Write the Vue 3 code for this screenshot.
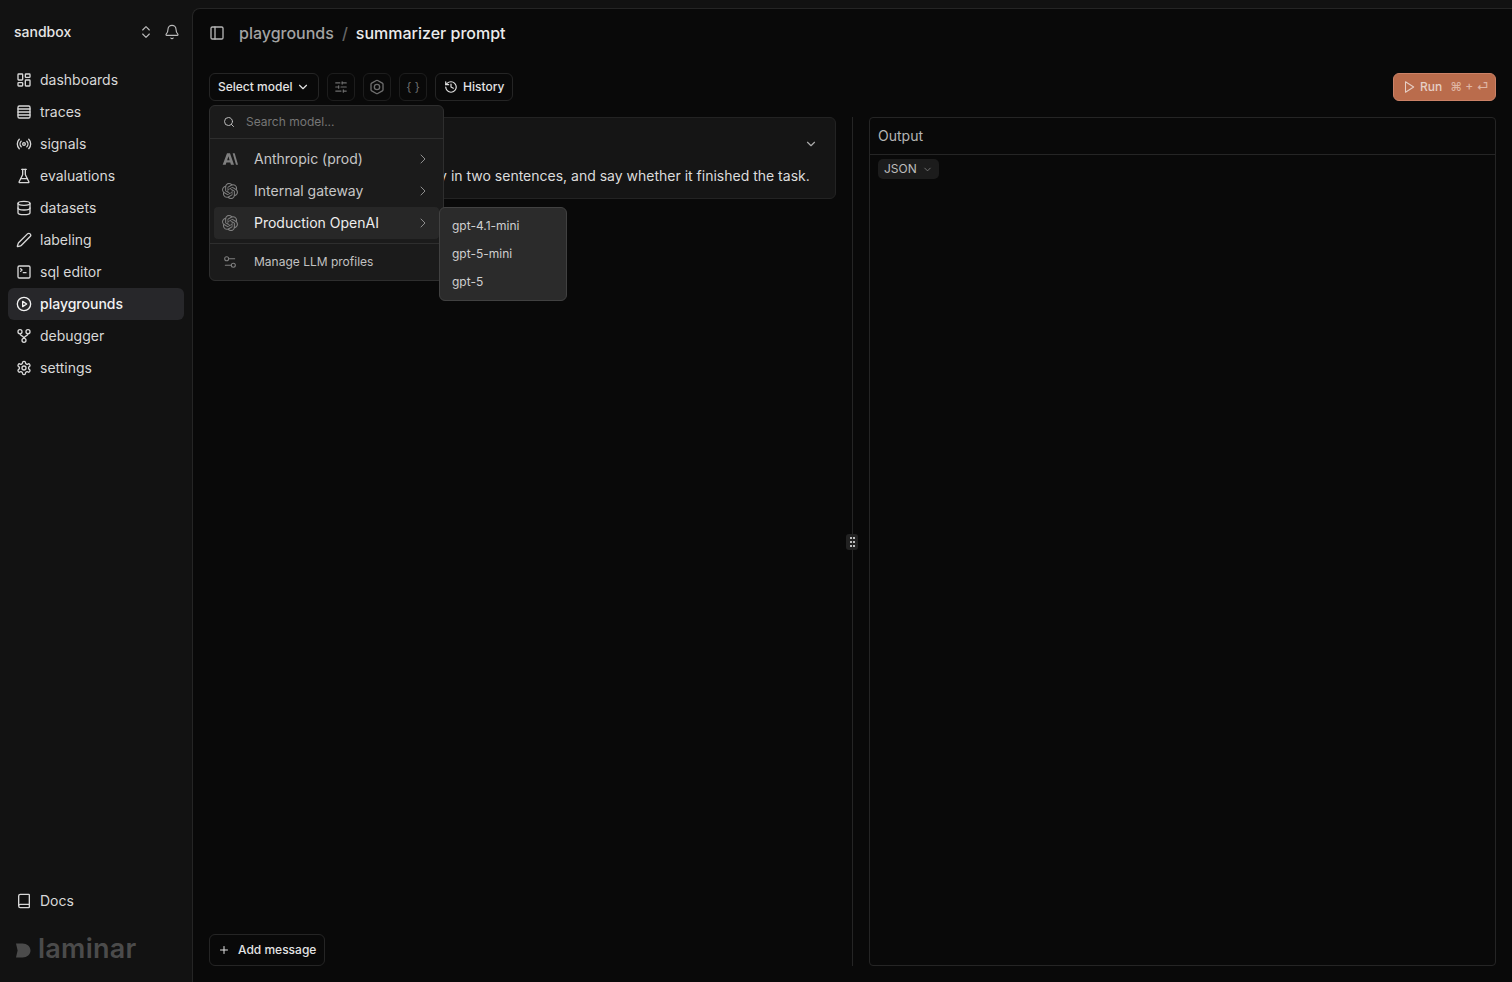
<template>
  <div class="app">
    <aside class="sidebar">
      <div class="project">
        <span class="project-name">sandbox</span>
        <svg class="ico switch" viewBox="0 0 24 24" v-html="icons.updown"></svg>
        <svg class="ico bell" viewBox="0 0 24 24" v-html="icons.bell"></svg>
      </div>
      <nav class="nav">
        <a v-for="item in navItems" :key="item.label" class="nav-item" :class="{ active: item.label === 'playgrounds' }">
          <svg class="ico" viewBox="0 0 24 24" v-html="icons[item.icon]"></svg>
          {{ item.label }}
        </a>
      </nav>
      <div class="sidebar-foot">
        <a class="nav-item docs">
          <svg class="ico" viewBox="0 0 24 24" v-html="icons.book"></svg>
          Docs
        </a>
        <div class="logo">
          <svg class="logo-mark" viewBox="0 0 15 15"><path d="M0 0.5h6.5C11 0.5 14.5 3.4 14.5 7.5S11 14.5 6.5 14.5H0L1.6 7.5z" /></svg>
          <span>laminar</span>
        </div>
      </div>
    </aside>

    <main class="main">
      <header class="topbar">
        <svg class="ico toggle" viewBox="0 0 24 24" v-html="icons.panel"></svg>
        <span class="crumb">playgrounds</span>
        <span class="crumb-sep">/</span>
        <span class="crumb current">summarizer prompt</span>
      </header>

      <div class="toolbar">
        <button class="btn model-btn">
          Select model
          <svg class="ico small" viewBox="0 0 24 24" v-html="icons.down"></svg>
        </button>
        <button class="btn square"><svg class="ico small dim" viewBox="0 0 24 24" v-html="icons.sliders"></svg></button>
        <button class="btn square"><svg class="ico dim" viewBox="0 0 24 24" v-html="icons.hexagon"></svg></button>
        <button class="btn square braces">{ }</button>
        <button class="btn history">
          <svg class="ico small" viewBox="0 0 24 24" v-html="icons.history"></svg>
          History
        </button>
        <button class="run">
          <svg class="ico run-ico" viewBox="0 0 24 24" v-html="icons.play"></svg>
          <span class="run-label">Run</span>
          <span class="run-keys">⌘ + ⏎</span>
        </button>

        <!-- model picker, open -->
        <div class="picker">
          <div class="picker-search">
            <svg class="ico tiny" viewBox="0 0 24 24" v-html="icons.search"></svg>
            <span>Search model...</span>
          </div>
          <div class="picker-list">
            <div v-for="p in providers" :key="p.name" class="provider" :class="{ open: p.open }">
              <svg v-if="p.logo === 'openai'" class="provider-logo" viewBox="0 0 24 24" fill="currentColor"><path :d="openaiPath" /></svg>
              <svg v-else class="provider-logo" viewBox="0 0 24 18" fill="currentColor"><path d="M7.5.5H12l6 17h-4.6l-1-3.2H6.6l-1 3.2H1zM11.4 10.7 9.6 5 7.7 10.7z" fill-rule="evenodd" /><path d="M16 .5h3l5 17h-3z" /></svg>
              <span class="provider-name">{{ p.name }}</span>
              <svg class="ico chev" viewBox="0 0 24 24" v-html="icons.right"></svg>
            </div>
          </div>
          <div class="picker-foot">
            <svg class="ico foot-ico" viewBox="0 0 24 24" v-html="icons.manage"></svg>
            <span>Manage LLM profiles</span>
          </div>
        </div>
        <div class="submenu">
          <div v-for="m in models" :key="m" class="submenu-item">{{ m }}</div>
        </div>
      </div>

      <div class="workspace">
        <section class="editor">
          <div class="message">
            <div class="message-head">
              <span>System</span>
              <svg class="ico small msg-chev" viewBox="0 0 24 24" v-html="icons.down"></svg>
            </div>
            <p class="message-text">Summarize the agent's run briefly in two sentences, and say whether it finished the task.</p>
          </div>
          <button class="btn add">
            <svg class="ico tiny" viewBox="0 0 24 24" v-html="icons.plus"></svg>
            Add message
          </button>
        </section>

        <div class="divider">
          <span class="grip">
            <i v-for="n in 6" :key="n"></i>
          </span>
        </div>

        <section class="output">
          <div class="output-head">Output</div>
          <div class="output-body">
            <span class="format">
              JSON
              <svg class="ico format-chev" viewBox="0 0 24 24" v-html="icons.down"></svg>
            </span>
          </div>
        </section>
      </div>
    </main>
  </div>
</template>

<script setup>
const navItems = [
  { label: 'dashboards', icon: 'dashboard' },
  { label: 'traces', icon: 'rows' },
  { label: 'signals', icon: 'radio' },
  { label: 'evaluations', icon: 'flask' },
  { label: 'datasets', icon: 'database' },
  { label: 'labeling', icon: 'pen' },
  { label: 'sql editor', icon: 'terminal' },
  { label: 'playgrounds', icon: 'play2' },
  { label: 'debugger', icon: 'fork' },
  { label: 'settings', icon: 'gear' }
]

const providers = [
  { name: 'Anthropic (prod)', logo: 'anthropic' },
  { name: 'Internal gateway', logo: 'openai' },
  { name: 'Production OpenAI', logo: 'openai', open: true }
]

const models = ['gpt-4.1-mini', 'gpt-5-mini', 'gpt-5']

const openaiPath = 'M22.2819 9.8211a5.9847 5.9847 0 0 0-.5157-4.9108 6.0462 6.0462 0 0 0-6.5098-2.9A6.0651 6.0651 0 0 0 4.9807 4.1818a5.9847 5.9847 0 0 0-3.9977 2.9 6.0462 6.0462 0 0 0 .7427 7.0966 5.98 5.98 0 0 0 .511 4.9107 6.051 6.051 0 0 0 6.5146 2.9001A5.9847 5.9847 0 0 0 13.2599 24a6.0557 6.0557 0 0 0 5.7718-4.2058 5.9894 5.9894 0 0 0 3.9977-2.9001 6.0557 6.0557 0 0 0-.7475-7.0729zm-9.022 12.6081a4.4755 4.4755 0 0 1-2.8764-1.0408l.1419-.0804 4.7783-2.7582a.7948.7948 0 0 0 .3927-.6813v-6.7369l2.02 1.1686a.071.071 0 0 1 .038.052v5.5826a4.504 4.504 0 0 1-4.4945 4.4944zm-9.6607-4.1254a4.4708 4.4708 0 0 1-.5346-3.0137l.142.0852 4.783 2.7582a.7712.7712 0 0 0 .7806 0l5.8428-3.3685v2.3324a.0804.0804 0 0 1-.0332.0615L9.74 19.9502a4.4992 4.4992 0 0 1-6.1408-1.6464zM2.3408 7.8956a4.485 4.485 0 0 1 2.3655-1.9728V11.6a.7664.7664 0 0 0 .3879.6765l5.8144 3.3543-2.0201 1.1685a.0757.0757 0 0 1-.071 0l-4.8303-2.7865A4.504 4.504 0 0 1 2.3408 7.872zm16.5963 3.8558L13.1038 8.364 15.1192 7.2a.0757.0757 0 0 1 .071 0l4.8303 2.7913a4.4944 4.4944 0 0 1-.6765 8.1042v-5.6772a.79.79 0 0 0-.407-.667zm2.0107-3.0231l-.142-.0852-4.7735-2.7818a.7759.7759 0 0 0-.7854 0L9.409 9.2297V6.8974a.0662.0662 0 0 1 .0284-.0615l4.8303-2.7866a4.4992 4.4992 0 0 1 6.6802 4.66zM8.3065 12.863l-2.02-1.1638a.0804.0804 0 0 1-.038-.0567V6.0742a4.4992 4.4992 0 0 1 7.3757-3.4537l-.142.0805L8.704 5.459a.7948.7948 0 0 0-.3927.6813zm1.0976-2.3654l2.602-1.4998 2.6069 1.4998v2.9994l-2.5974 1.4997-2.6067-1.4997Z'

const icons = {
  updown: '<path d="m7 15 5 5 5-5"/><path d="m7 9 5-5 5 5"/>',
  bell: '<path d="M10.268 21a2 2 0 0 0 3.464 0"/><path d="M3.262 15.326A1 1 0 0 0 4 17h16a1 1 0 0 0 .74-1.673C19.41 13.956 18 12.499 18 8A6 6 0 0 0 6 8c0 4.499-1.411 5.956-2.738 7.326"/>',
  dashboard: '<rect x="3" y="3" width="7" height="9" rx="1"/><rect x="14" y="3" width="7" height="5" rx="1"/><rect x="14" y="12" width="7" height="9" rx="1"/><rect x="3" y="16" width="7" height="5" rx="1"/>',
  rows: '<rect x="3" y="3" width="18" height="18" rx="2"/><path d="M21 7.5H3"/><path d="M21 12H3"/><path d="M21 16.5H3"/>',
  radio: '<path d="M4.9 19.1C1 15.2 1 8.8 4.9 4.9"/><path d="M7.8 16.2c-2.3-2.3-2.3-6.1 0-8.5"/><circle cx="12" cy="12" r="2"/><path d="M16.2 7.8c2.3 2.3 2.3 6.1 0 8.5"/><path d="M19.1 4.9C23 8.8 23 15.1 19.1 19"/>',
  flask: '<path d="M10 2v7.527a2 2 0 0 1-.211.896L4.72 20.55a1 1 0 0 0 .9 1.45h12.76a1 1 0 0 0 .9-1.45l-5.069-10.127A2 2 0 0 1 14 9.527V2"/><path d="M8.5 2h7"/><path d="M7 16h10"/>',
  database: '<ellipse cx="12" cy="5" rx="9" ry="3"/><path d="M3 5V19A9 3 0 0 0 21 19V5"/><path d="M3 12A9 3 0 0 0 21 12"/>',
  pen: '<path d="M21.174 6.812a1 1 0 0 0-3.986-3.987L3.842 16.174a2 2 0 0 0-.5.83l-1.321 4.352a.5.5 0 0 0 .623.622l4.353-1.32a2 2 0 0 0 .83-.497z"/>',
  terminal: '<path d="m7 11 2-2-2-2"/><path d="M11 13h4"/><rect x="3" y="3" width="18" height="18" rx="2"/>',
  play2: '<circle cx="12" cy="12" r="10"/><polygon points="10 8 16 12 10 16 10 8"/>',
  fork: '<circle cx="6" cy="5.5" r="3"/><circle cx="18" cy="5.5" r="3"/><circle cx="12" cy="18.5" r="3"/><path d="M6 8.5c0 3.5 6 3 6 7"/><path d="M18 8.5c0 3.5-6 3-6 7"/>',
  gear: '<path d="M12.22 2h-.44a2 2 0 0 0-2 2v.18a2 2 0 0 1-1 1.73l-.43.25a2 2 0 0 1-2 0l-.15-.08a2 2 0 0 0-2.73.73l-.22.38a2 2 0 0 0 .73 2.73l.15.1a2 2 0 0 1 1 1.72v.51a2 2 0 0 1-1 1.74l-.15.09a2 2 0 0 0-.73 2.73l.22.38a2 2 0 0 0 2.73.73l.15-.08a2 2 0 0 1 2 0l.43.25a2 2 0 0 1 1 1.73V20a2 2 0 0 0 2 2h.44a2 2 0 0 0 2-2v-.18a2 2 0 0 1 1-1.73l.43-.25a2 2 0 0 1 2 0l.15.08a2 2 0 0 0 2.73-.73l.22-.39a2 2 0 0 0-.73-2.73l-.15-.08a2 2 0 0 1-1-1.74v-.5a2 2 0 0 1 1-1.74l.15-.09a2 2 0 0 0 .73-2.73l-.22-.38a2 2 0 0 0-2.73-.73l-.15.08a2 2 0 0 1-2 0l-.43-.25a2 2 0 0 1-1-1.73V4a2 2 0 0 0-2-2z"/><circle cx="12" cy="12" r="3"/>',
  book: '<path d="M4 19.5v-15A2.5 2.5 0 0 1 6.5 2H19a1 1 0 0 1 1 1v18a1 1 0 0 1-1 1H6.5a1 1 0 0 1 0-5H20"/>',
  panel: '<rect x="3" y="3" width="18" height="18" rx="2"/><path d="M9 3v18"/>',
  down: '<path d="m6 9 6 6 6-6"/>',
  right: '<path d="m9 18 6-6-6-6"/>',
  sliders: '<path d="M10 5H3"/><path d="M12 19H3"/><path d="M14 3v4"/><path d="M16 17v4"/><path d="M21 12h-9"/><path d="M21 19h-5"/><path d="M21 5h-7"/><path d="M8 10v4"/><path d="M8 12H3"/>',
  hexagon: '<path d="M21 16V8a2 2 0 0 0-1-1.73l-7-4a2 2 0 0 0-2 0l-7 4A2 2 0 0 0 3 8v8a2 2 0 0 0 1 1.73l7 4a2 2 0 0 0 2 0l7-4A2 2 0 0 0 21 16z"/><circle cx="12" cy="12" r="4"/>',
  history: '<path d="M3 12a9 9 0 1 0 9-9 9.75 9.75 0 0 0-6.74 2.74L3 8"/><path d="M3 3v5h5"/><path d="M12 7v5l4 2"/>',
  search: '<path d="m21 21-4.34-4.34"/><circle cx="11" cy="11" r="8"/>',
  manage: '<path d="M14 17H5"/><path d="M19 7h-9"/><circle cx="17" cy="17" r="3"/><circle cx="7" cy="7" r="3"/>',
  play: '<polygon points="6 3 20 12 6 21 6 3"/>',
  plus: '<path d="M5 12h14"/><path d="M12 5v14"/>'
}
</script>

<style scoped>
.app {
  display: flex;
  height: 982px;
  overflow: hidden;
  background: #121212;
  color: #e6e6e6;
  font-family: Inter, "Liberation Sans", sans-serif;
  line-height: 20px;
  will-change: opacity;
}

.ico {
  width: 16px;
  height: 16px;
  flex-shrink: 0;
  fill: none;
  stroke: currentColor;
  stroke-width: 2;
  stroke-linecap: round;
  stroke-linejoin: round;
}
.ico.small { width: 14px; height: 14px; }
.ico.tiny { width: 12px; height: 12px; }
.ico.dim { color: #6e6e6e; }

/* sidebar */
.sidebar {
  width: 192px;
  flex-shrink: 0;
  display: flex;
  flex-direction: column;
  padding-bottom: 17px;
  box-sizing: border-box;
}

.project {
  height: 64px;
  display: flex;
  align-items: center;
  padding-left: 14px;
  padding-right: 12px;
  box-sizing: border-box;
}
.project-name {
  flex-grow: 1;
  font-size: 14px;
  font-weight: 500;
}
.switch { color: #bbb; stroke-width: 1.7; margin-right: 10px; }
.bell { color: #bbb; stroke-width: 1.7; }

.nav {
  display: flex;
  flex-direction: column;
  padding: 0 8px;
}
.nav-item {
  height: 32px;
  display: flex;
  align-items: center;
  gap: 8px;
  padding: 0 8px;
  border-radius: 6px;
  font-size: 14px;
  font-weight: 400;
  color: #d8d8d8;
}
.nav-item.active {
  background: #27272a;
  color: #f2f2f2;
  font-weight: 500;
}

.sidebar-foot {
  margin-top: auto;
  padding: 0 8px;
}
.docs { margin-bottom: 16px; }
.logo {
  display: flex;
  align-items: center;
  gap: 7px;
  padding-left: 8px;
  height: 32px;
  color: #4b4b4b;
  font-size: 27px;
  font-weight: 600;
  letter-spacing: 0.25px;
}
.logo-mark { width: 15px; height: 15px; fill: currentColor; margin-top: 2px; }

/* main area */
.main {
  flex-grow: 1;
  min-width: 0;
  margin-top: 8px;
  display: flex;
  flex-direction: column;
  background: #090909;
  border-left: 1px solid #252525;
  border-top: 1px solid #252525;
  border-top-left-radius: 8px;
}

.topbar {
  height: 48px;
  flex-shrink: 0;
  display: flex;
  align-items: center;
  padding-left: 16px;
  font-size: 16px;
  font-weight: 500;
  line-height: 24px;
}
.toggle { color: #b5b5b5; margin-right: 14px; }
.crumb { color: #a3a3a3; }
.crumb-sep { color: #666; margin: 0 8px; }
.crumb.current { color: #ececec; }

.toolbar {
  position: relative;
  margin-top: 16px;
  height: 28px;
  flex-shrink: 0;
  display: flex;
  align-items: center;
  gap: 8px;
  padding: 0 16px;
}
.btn {
  display: flex;
  align-items: center;
  height: 28px;
  box-sizing: border-box;
  padding: 0 8px;
  background: transparent;
  border: 1px solid #252525;
  border-radius: 6px;
  color: #e4e4e4;
  font-family: inherit;
  font-size: 12px;
  line-height: 16px;
  font-weight: 500;
  white-space: nowrap;
}
.model-btn { width: 110px; gap: 4px; }
.square { width: 28px; padding: 0; justify-content: center; border-color: #1d1d1d; }
.braces {
  color: #6e6e6e;
  font-weight: 400;
}
.history { width: 78px; gap: 5px; }

.run {
  margin-left: auto;
  width: 103px;
  height: 28px;
  display: flex;
  align-items: center;
  box-sizing: border-box;
  padding: 0 8px;
  background: #ba6c4c;
  border: 1px solid #cb8267;
  border-radius: 6px;
  color: #e6cfc5;
  font-family: inherit;
  font-size: 12px;
  line-height: 16px;
  font-weight: 500;
}
.run-ico { width: 14px; height: 14px; stroke-width: 1.8; }
.run-label { margin-left: 4px; }
.run-keys {
  margin-left: 8px;
  font-size: 12px;
  color: #dfb5a3;
  white-space: nowrap;
}

/* model picker */
.picker {
  position: absolute;
  left: 16px;
  top: 32px;
  z-index: 10;
  width: 235px;
  box-sizing: border-box;
  background: #1b1b1b;
  border: 1px solid #2e2e2e;
  border-radius: 6px;
}
.picker-search {
  height: 33px;
  box-sizing: border-box;
  display: flex;
  align-items: center;
  gap: 11px;
  padding-left: 13px;
  border-bottom: 1px solid #2e2e2e;
  font-size: 12px;
  line-height: 16px;
  color: #767676;
}
.picker-search .ico { color: #bbb; }
.picker-list {
  padding: 4px;
  border-bottom: 1px solid #2e2e2e;
}
.provider {
  height: 32px;
  display: flex;
  align-items: center;
  padding: 0 8px;
  border-radius: 4px;
  font-size: 14px;
  color: #c6c6c6;
}
.provider.open {
  background: #272727;
  color: #ededed;
}
.provider-logo {
  width: 16px;
  height: 16px;
  flex-shrink: 0;
  color: #7f7f7f;
  margin-right: 16px;
}
.provider-name { flex-grow: 1; }
.chev { color: #8d8d8d; stroke-width: 1.5; }
.picker-foot {
  height: 36px;
  display: flex;
  align-items: center;
  gap: 16px;
  padding-left: 12px;
  font-size: 12px;
  line-height: 16px;
  color: #c2c2c2;
}
.foot-ico { color: #7f7f7f; stroke-width: 1.6; }

.submenu {
  position: absolute;
  left: 246px;
  top: 134px;
  z-index: 11;
  width: 128px;
  box-sizing: border-box;
  padding: 4px 0;
  background: #2b2b2b;
  border: 1px solid #414141;
  border-radius: 6px;
}
.submenu-item {
  height: 28px;
  display: flex;
  align-items: center;
  padding-left: 12px;
  font-size: 12px;
  line-height: 16px;
  color: #cfcfcf;
}

/* editor and output */
.workspace {
  flex-grow: 1;
  min-height: 0;
  display: flex;
  margin-top: 16px;
  padding: 0 16px 16px;
}
.editor {
  width: 627px;
  flex-shrink: 0;
  display: flex;
  flex-direction: column;
  justify-content: space-between;
  align-items: flex-start;
}
.message {
  width: 100%;
  box-sizing: border-box;
  height: 82px;
  background: #151515;
  border: 1px solid #232323;
  border-radius: 6px;
  padding: 0 8px;
}
.message-head {
  height: 48px;
  display: flex;
  align-items: center;
  justify-content: space-between;
  font-size: 14px;
  color: #bbb;
}
.msg-chev { color: #aaa; margin-right: 9px; margin-top: 3px; }
.message-text {
  margin: 0 0 0 5px;
  font-size: 14px;
  color: #dcdcdc;
  white-space: nowrap;
}
.add {
  width: 116px;
  height: 32px;
  gap: 8px;
  padding: 0 8px;
}

.divider {
  position: relative;
  width: 33px;
  flex-shrink: 0;
  display: flex;
  justify-content: center;
}
.divider::before {
  content: '';
  width: 1px;
  background: #252525;
}
.grip {
  position: absolute;
  left: 10px;
  top: 417px;
  width: 12px;
  height: 16px;
  border-radius: 3px;
  background: #222;
  display: grid;
  grid-template-columns: 2px 2px;
  grid-auto-rows: 2px;
  gap: 2px 1px;
  justify-content: center;
  align-content: center;
}
.grip i {
  background: #bdbdbd;
}

.output {
  flex-grow: 1;
  min-width: 0;
  box-sizing: border-box;
  border: 1px solid #252525;
  border-radius: 4px;
}
.output-head {
  height: 37px;
  box-sizing: border-box;
  display: flex;
  align-items: center;
  padding-left: 8px;
  border-bottom: 1px solid #252525;
  font-size: 14px;
  color: #b5b5b5;
}
.output-body {
  display: flex;
  padding: 4px 8px;
}
.format {
  display: flex;
  align-items: center;
  height: 20px;
  width: 61px;
  box-sizing: border-box;
  padding-left: 6px;
  gap: 5px;
  background: #1c1c1c;
  border-radius: 5px;
  font-size: 12px;
  line-height: 16px;
  color: #bdbdbd;
}
.format-chev { width: 11px; height: 11px; color: #777; }
</style>

<style>
html, body {
  margin: 0;
  background: #121212;
  overflow: hidden;
}
</style>
